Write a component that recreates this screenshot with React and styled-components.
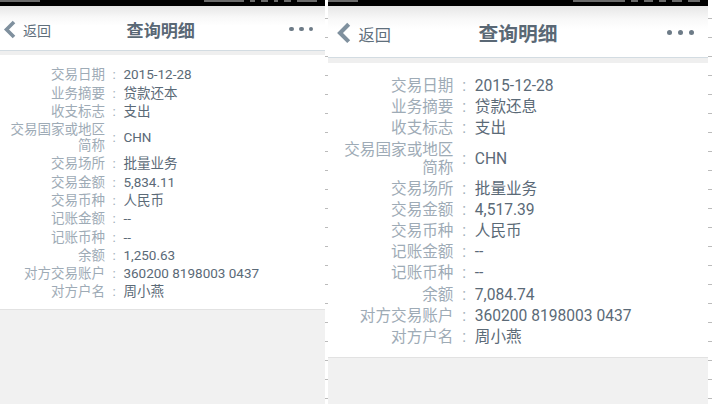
import React from 'react';
import styled, {createGlobalStyle} from 'styled-components';

const rows = (summary, amount, balance) => [
    ['交易日期', '2015-12-28'],
    ['业务摘要', summary],
    ['收支标志', '支出'],
    ['交易国家或地区简称', 'CHN'],
    ['交易场所', '批量业务'],
    ['交易金额', amount],
    ['交易币种', '人民币'],
    ['记账金额', '--'],
    ['记账币种', '--'],
    ['余额', balance],
    ['对方交易账户', '360200 8198003 0437'],
    ['对方户名', '周小燕'],
];

const screens = [
    {
        s: 1, width: 325, crop: 3.6,
        status: {time: 40, icons: [40, 5, 7, 4, 7, 20]},
        rows: rows('贷款还本', '5,834.11', '1,250.63'),
    },
    {
        s: 1.156, width: 380, crop: 0,
        status: {time: 30, icons: [52, 7, 9, 7, 10, 12]},
        rows: rows('贷款还息', '4,517.39', '7,084.74'),
    },
];

const Chevron = () => (
    <svg viewBox="0 0 13 19" width="100%" height="100%">
        <polyline points="11,2 3.5,9.5 11,17" fill="none" stroke="#7f909e" strokeWidth="3.6"
                  strokeLinejoin="miter" strokeLinecap="butt"/>
    </svg>
);

const DetailScreen = ({s, width, crop, status, rows}) => (
    <Screen $s={s} $width={width}>
        <StatusBar>
            <StatusMark $w={status.time}/>
            <StatusIcons>
                {status.icons.map((w, i) => <StatusMark key={i} $w={w}/>)}
            </StatusIcons>
        </StatusBar>
        <Inner $crop={crop}>
            <Header>
                <Back>
                    <BackIcon><Chevron/></BackIcon>
                    <BackText>返回</BackText>
                </Back>
                <Title>查询明细</Title>
                <More>
                    <Dot/><Dot/><Dot/>
                </More>
            </Header>
            <Band/>
            <Details>
                {rows.map(([label, value]) => (
                    <Row key={label}>
                        <Label>{label}</Label>
                        <Colon>:</Colon>
                        <Value>{value}</Value>
                    </Row>
                ))}
            </Details>
        </Inner>
    </Screen>
);

const App = () => (
    <>
        <GlobalStyle/>
        <Page>
            {screens.map((scr, i) => <DetailScreen key={i} {...scr}/>)}
        </Page>
    </>
);

export default App;

const GlobalStyle = createGlobalStyle`
    html, body {
        margin: 0;
        padding: 0;
        background: #fff;
    }
    body {
        font-family: Roboto, "Noto Sans CJK SC", sans-serif;
    }
`;

// white strips between and after the screens carry the ruler ticks
const Page = styled.div`
    display: flex;
    gap: 3px;
    width: 712px;
    height: 404px;
    overflow: hidden;
    background: repeating-linear-gradient(to bottom, #fff 0, #fff 18px, #bbbbbb 18px, #bbbbbb 19px);
`;

const Screen = styled.section`
    --u: ${p => p.$s}px;
    width: ${p => p.$width}px;
    flex: none;
    display: flex;
    flex-direction: column;
    overflow: hidden;
    background: #f1f1f1;
`;

const StatusBar = styled.div`
    height: 6px;
    flex: none;
    background: #000;
    display: flex;
    justify-content: space-between;
    align-items: flex-start;
    padding-right: 8px;
`;

const StatusIcons = styled.div`
    display: flex;
    gap: 6px;
`;

const StatusMark = styled.span`
    width: ${p => p.$w}px;
    height: 2px;
    background: #6a6a6a;
`;

const Inner = styled.div`
    width: calc(var(--u) * 328.7);
    margin-left: ${p => -p.$crop}px;
    flex: 1;
    display: flex;
    flex-direction: column;
`;

const Header = styled.header`
    height: calc(var(--u) * 44.7);
    box-sizing: border-box;
    padding-top: calc(var(--u) * 3.5);
    display: grid;
    grid-template-columns: 1fr auto 1fr;
    align-items: center;
    background: linear-gradient(to bottom, #e6e6e6 0%, #f8f8f8 25%, #fff 45%);
    border-bottom: calc(var(--u) * 1.7) solid #d3dce2;
`;

const Back = styled.div`
    display: flex;
    align-items: center;
    gap: calc(var(--u) * 6.5);
    padding-left: calc(var(--u) * 7);
`;

const BackIcon = styled.span`
    display: block;
    width: calc(var(--u) * 13);
    height: calc(var(--u) * 19);
`;

const BackText = styled.span`
    font-family: "Noto Sans CJK SC", sans-serif;
    font-size: calc(var(--u) * 14);
    line-height: 1;
    color: #5f6f7c;
    padding-top: calc(var(--u) * 1.5);
`;

const Title = styled.h1`
    margin: 0;
    font-family: "Noto Sans CJK SC", sans-serif;
    font-size: calc(var(--u) * 17.1);
    font-weight: 700;
    line-height: 1;
    color: #5a6875;
`;

const More = styled.div`
    display: flex;
    justify-content: flex-end;
    gap: calc(var(--u) * 5);
    padding-right: calc(var(--u) * 12);
    margin-top: calc(var(--u) * -1.5);
`;

const Dot = styled.span`
    width: calc(var(--u) * 4.6);
    height: calc(var(--u) * 4.6);
    border-radius: 50%;
    background: #6d7b87;
`;

const Band = styled.div`
    height: calc(var(--u) * 4.6);
    background: #efefef;
`;

const Details = styled.div`
    background: #fff;
    padding: calc(var(--u) * 10.9) 0 calc(var(--u) * 8);
    border-bottom: 1px solid #e2e2e2;
`;

const Row = styled.div`
    display: grid;
    grid-template-columns: calc(var(--u) * 108.5) calc(var(--u) * 18.5) 1fr;
    align-items: center;
    padding: calc(var(--u) * 1.3) 0;
    font-size: calc(var(--u) * 13.5);
    line-height: calc(var(--u) * 15.7);
`;

const Label = styled.span`
    padding-left: calc(var(--u) * 12);
    text-align: right;
    color: #9eabb6;
`;

const Colon = styled.span`
    text-align: center;
    color: #a3afb9;
`;

const Value = styled.span`
    color: #5b6a77;
    white-space: nowrap;
`;
